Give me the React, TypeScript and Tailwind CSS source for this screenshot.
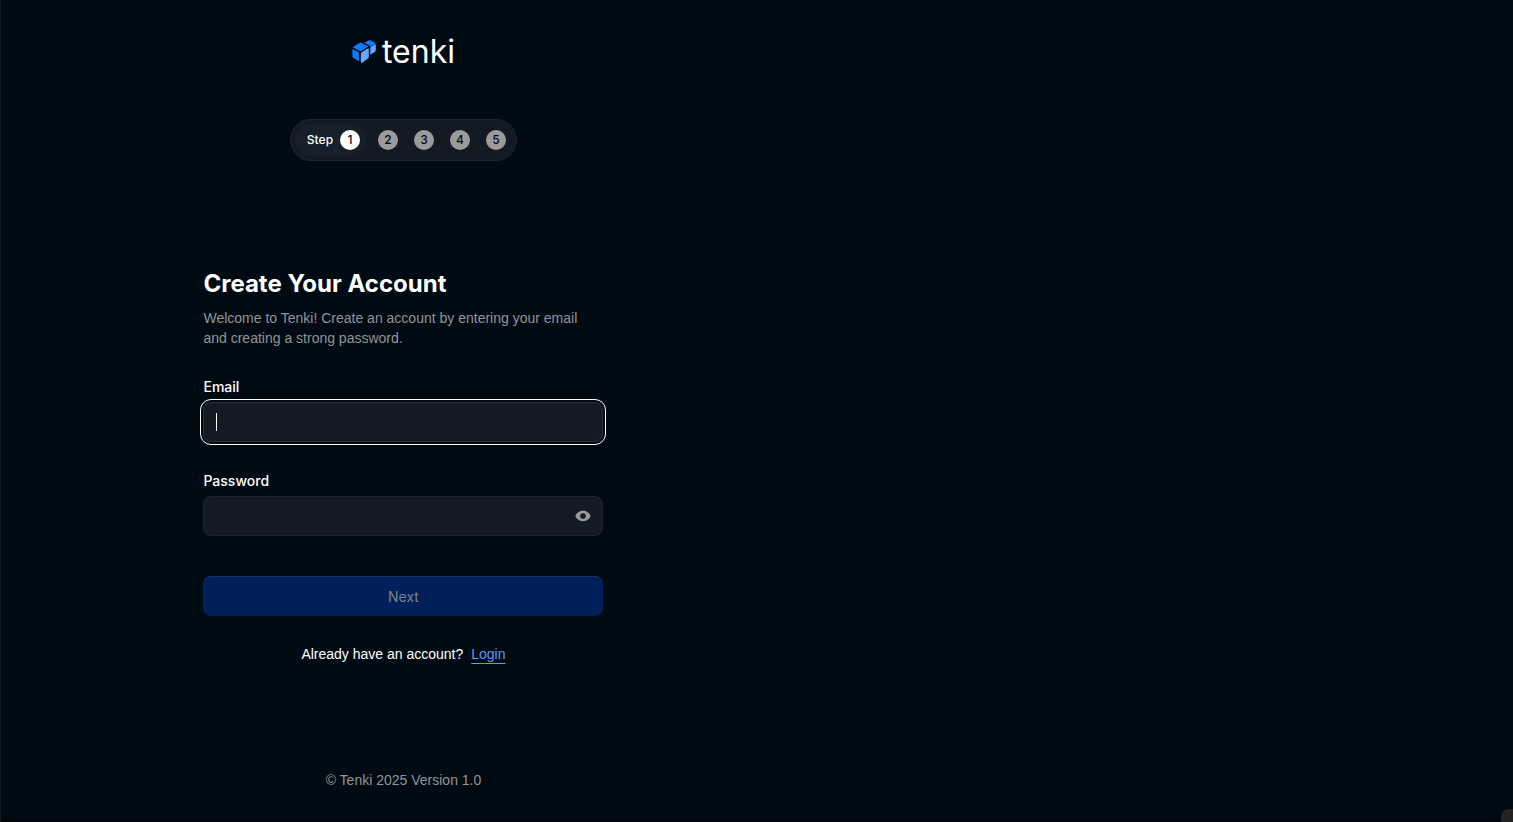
import React from "react";

interface FieldProps {
  id: string;
  label: string;
  type: string;
  active?: boolean;
  children?: React.ReactNode;
}

const steps = [2, 3, 4, 5];

const Logo: React.FC = () => (
  <div className="flex h-7 items-center gap-1.5 text-white">
    <svg className="h-6 w-6" viewBox="0 0 24 24" aria-hidden="true">
      <path d="M0.7 7.2 L7.4 2.9 Q8.3 2.4 9.2 2.8 L16.3 6.5 L9.7 10.8 Q8.8 11.3 8 10.9 Z" fill="#0a7cff" />
      <path d="M0.4 9.6 Q0.4 8.8 1.1 9.2 L6.2 12.1 Q6.9 12.5 6.9 13.3 V20.4 Q6.9 21.3 6.1 20.8 L1.2 17.8 Q0.4 17.3 0.4 16.4 Z" fill="#0a7cff" />
      <path d="M8.9 13.8 Q8.9 12.8 9.7 12.3 L15.7 8.5 Q16.8 7.9 16.8 9 V17 Q16.8 18 16 18.5 L10.2 22.7 Q8.9 23.5 8.9 22.1 Z" fill="#60a9ff" />
      <path d="M12.3 2.7 L17.1 0.3 Q17.7 0 18.3 0.3 L23.4 2.9 V4 L19.1 6.8 Q18.2 7.2 17.7 6.6 V5.6 Z" fill="#0a7cff" />
      <path d="M18.3 8.4 Q18.3 7.6 19 7.1 L23 4.5 Q23.8 4.1 23.8 5 V10.3 Q23.8 11.1 23.2 11.5 L19.3 14.2 Q18.3 14.8 18.3 13.8 Z" fill="#60a9ff" />
    </svg>
    <span className="text-[32px] leading-none">tenki</span>
  </div>
);

const StepIndicator: React.FC = () => (
  <div className="flex items-center gap-3 rounded-full border border-[#1f252e] bg-[#141a23] p-1 pr-2.5 text-xs font-medium">
    <div className="flex h-8 items-center gap-[7px] rounded-full bg-[#16202b] pr-1.5 pl-3 text-white">
      Step
      <span className="flex size-5 items-center justify-center rounded-full bg-white text-[#000a13]">1</span>
    </div>
    <div className="flex gap-4 text-[#000a13]">
      {steps.map((step) => (
        <span key={step} className="flex size-5 items-center justify-center rounded-full bg-[#9b9b9b]">
          {step}
        </span>
      ))}
    </div>
  </div>
);

const Field: React.FC<FieldProps> = ({ id, label, type, active, children }) => (
  <div>
    <label htmlFor={id} className="mb-[5px] block text-sm font-medium text-white">
      {label}
    </label>
    <div className="relative">
      <input
        id={id}
        type={type}
        className={`block h-10 w-full rounded-lg border bg-[#141a23] px-3 text-sm text-white caret-transparent ${
          active
            ? "border-[#2a3039] outline-1 outline-offset-2 outline-white"
            : "border-[#1f252e] outline-none"
        }`}
      />
      {children}
    </div>
  </div>
);

export default function App() {
  return (
    <div className="relative grid min-h-screen grid-cols-[8fr_7fr] overflow-hidden bg-[#000a13] font-['Inter',sans-serif] shadow-[inset_1px_0_0_#111518,inset_0_-3px_0_#00050d]">
      <div className="flex flex-col items-center px-6 pt-[38px] pb-8">
        <header className="flex flex-col items-center gap-[53px]">
          <Logo />
          <StepIndicator />
        </header>

        <main className="flex w-full max-w-[400px] flex-1 flex-col justify-center">
          <h1 className="text-2xl font-bold text-white">Create Your Account</h1>
          <p className="mt-2 font-['Liberation_Sans',sans-serif] text-sm text-[#949494]">
            Welcome to Tenki! Create an account by entering your email and creating a strong password.
          </p>

          <form className="mt-[29px]" onSubmit={(e) => e.preventDefault()}>
            <div className="flex flex-col gap-[29px]">
              <Field id="email" label="Email" type="email" active>
                <span className="absolute top-[11px] left-[13px] h-[18px] w-px bg-white" />
              </Field>
              <Field id="password" label="Password" type="password">
                <button
                  type="button"
                  aria-label="Show password"
                  className="absolute inset-y-0 right-3 flex items-center text-[#9b9b9b]"
                >
                  <svg className="size-4" viewBox="0 0 16 16" fill="currentColor">
                    <path
                      fillRule="evenodd"
                      d="M8 2.8C4.8 2.8 1.7 4.9 0.6 7.5a1.2 1.2 0 0 0 0 1C1.7 11.1 4.8 13.2 8 13.2s6.3-2.1 7.4-4.7a1.2 1.2 0 0 0 0-1C14.3 4.9 11.2 2.8 8 2.8ZM8 5.2a2.8 2.8 0 1 1 0 5.6a2.8 2.8 0 0 1 0-5.6Z"
                    />
                  </svg>
                </button>
              </Field>
            </div>
            <button
              type="submit"
              disabled
              className="mt-10 h-10 w-full rounded-lg border-t border-[#1b3468] bg-[#00205b] pt-px text-sm text-[#7d828c]"
            >
              Next
            </button>
          </form>

          <p className="mt-7 flex justify-center gap-2 font-['Liberation_Sans',sans-serif] text-sm text-white">
            Already have an account?
            <a href="#login" className="text-[#5c9cf5] underline underline-offset-4">
              Login
            </a>
          </p>
        </main>

        <footer className="font-['Liberation_Sans',sans-serif] text-sm text-[#949494]">
          © Tenki 2025 Version 1.0
        </footer>
      </div>
      <div className="absolute right-0 bottom-0 h-[13px] w-3 rounded-tl-lg bg-[#222222]" />
    </div>
  );
}
